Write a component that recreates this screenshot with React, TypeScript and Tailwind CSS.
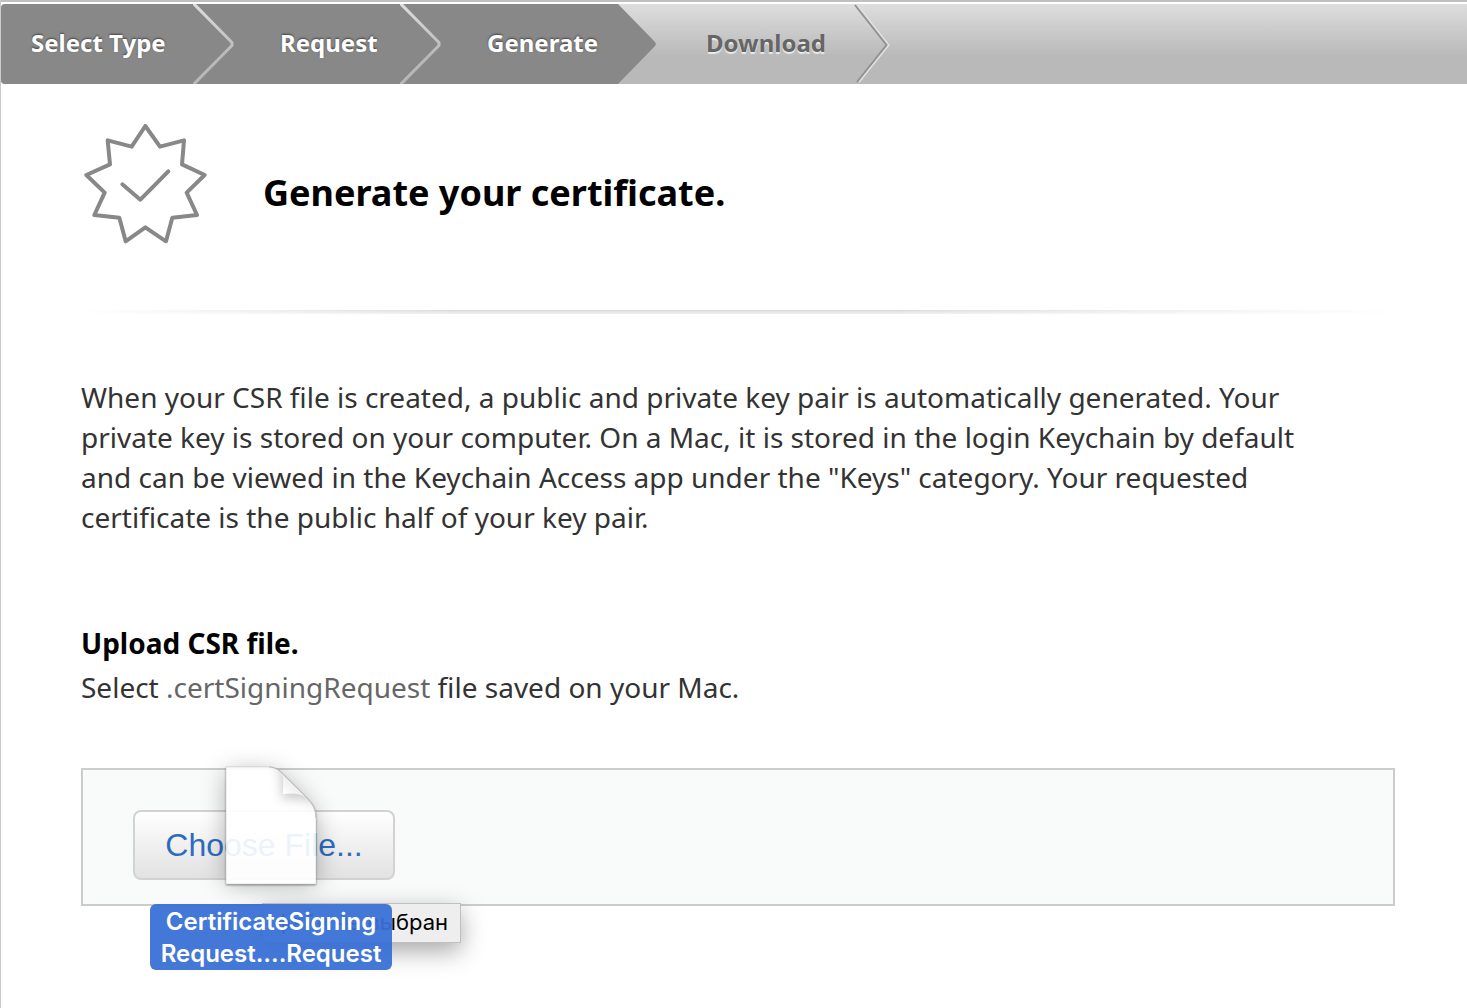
import React from "react";

interface StepProps {
  label: string;
  className: string;
  current?: boolean;
}

const Step: React.FC<StepProps> = ({ label, className, current }) => {
  return (
    <a
      href="#"
      aria-current={current ? "step" : undefined}
      className={`flex h-full shrink-0 items-center whitespace-nowrap pb-0.5 text-2xl font-bold ${className}`}
    >
      {label}
    </a>
  );
};

const DoneChevron: React.FC = () => (
  <svg className="h-20 w-[41px] shrink-0 bg-[#888]" viewBox="0 0 41 80" fill="none" aria-hidden="true">
    <defs>
      <linearGradient id="chevron" x1="0" y1="0" x2="0" y2="80" gradientUnits="userSpaceOnUse">
        <stop offset="0" stopColor="#dedede" />
        <stop offset="0.65" stopColor="#b8b8b8" />
        <stop offset="1" stopColor="#b8b8b8" />
      </linearGradient>
    </defs>
    <path d="M-1 -2 L39 38.5 V41.5 L-1 82" stroke="url(#chevron)" strokeWidth="3" />
  </svg>
);

const CurrentArrow: React.FC = () => (
  <svg className="h-20 w-[38px] shrink-0" viewBox="0 0 38 80" aria-hidden="true">
    <path d="M0 0 L37 38 Q38.500 40 37 42 L0 80 Z" fill="#888" />
  </svg>
);

const NextChevron: React.FC = () => (
  <svg className="h-20 w-9 shrink-0" viewBox="0 0 36 80" fill="none" aria-hidden="true">
    <path d="M3 1 L34.500 41 L5 78" stroke="#e2e2e2" strokeWidth="2" />
    <path d="M1 1 L32.500 41 L3 78" stroke="#929292" strokeWidth="2" />
  </svg>
);

const CertificateBadge: React.FC = () => (
  <svg
    className="h-[122px] w-[123px] shrink-0"
    viewBox="41 41 369 366"
    fill="none"
    stroke="#888"
    strokeWidth="12"
    strokeLinecap="round"
    strokeLinejoin="round"
    aria-hidden="true"
  >
    <path d="M225 47 L269 109 L341 90 L335 162 L403 194 L349 247 L380 314 L306 322 L287 393 L225 351 L166 393 L147 322 L72 314 L103 247 L48 194 L119 162 L112 90 L184 109 Z" />
    <path d="M156 222 L210 268 L294 183" />
  </svg>
);

const DocumentIcon: React.FC = () => (
  <svg
    className="mx-auto block h-[120px] w-[90px] overflow-visible"
    viewBox="1 0 90 120"
    aria-hidden="true"
  >
    <defs>
      <linearGradient id="fold" x1="59" y1="28" x2="70" y2="17" gradientUnits="userSpaceOnUse">
        <stop offset="0" stopColor="#ffffff" />
        <stop offset="1" stopColor="#ececec" />
      </linearGradient>
      <filter id="blurWide" x="-60%" y="-50%" width="220%" height="200%">
        <feGaussianBlur stdDeviation="12" />
      </filter>
      <filter id="blurFold" x="-100%" y="-100%" width="300%" height="300%">
        <feGaussianBlur stdDeviation="6" />
      </filter>
      <filter id="blurEdge" x="-10%" y="-10%" width="120%" height="120%">
        <feGaussianBlur stdDeviation="1" />
      </filter>
      <clipPath id="inside">
        <path d="M1 1 H44 C50 1 54 4 58 8 L82 32 C88 38 91 44 91 52 V118 H1 Z" />
      </clipPath>
      <mask id="outside" maskUnits="userSpaceOnUse" x="-60" y="-60" width="212" height="260">
        <rect x="-60" y="-60" width="212" height="260" fill="#fff" />
        <path d="M1 1 H44 C50 1 54 4 58 8 L82 32 C88 38 91 44 91 52 V118 H1 Z" fill="#000" />
      </mask>
    </defs>
    <g mask="url(#outside)">
      <path
        d="M1 6 H44 L58 13 L82 37 L91 57 V118 H1 Z"
        fill="#000"
        fillOpacity="0.3"
        filter="url(#blurWide)"
      />
      <path
        d="M1 2 H44 C50 2 54 5 58 9 L82 33 C88 39 91 45 91 53 V119 H1 Z"
        fill="#000"
        fillOpacity="0.5"
        filter="url(#blurEdge)"
      />
    </g>
    <path
      d="M1 1 H44 C50 1 54 4 58 8 L82 32 C88 38 91 44 91 52 V118 H1 Z"
      fill="#fff"
      fillOpacity="0.91"
      stroke="#ccc"
      strokeOpacity="0.6"
    />
    <g clipPath="url(#inside)">
      <path d="M48 0 L57 6 L57 32 L84 33 L92 42 L92 0 Z" fill="#000" fillOpacity="0.22" filter="url(#blurFold)" />
    </g>
    <path d="M57 8 C59 14 58 22 58 28 C66 27 74 27 81 31 Z" fill="url(#fold)" />
    <path d="M44 1 C50 1 54 4 58 8 L82 32 C88 38 91 44 91 52" fill="none" stroke="#bbb" />
  </svg>
);

const App: React.FC = () => {
  return (
    <div className="min-h-screen overflow-hidden border-l border-[#ccc] bg-white font-['Noto_Sans',sans-serif] text-[#333]">
      <div className="h-1 border-b-2 border-white bg-[#c0c0c0]" />
      <nav
        aria-label="Progress"
        className="flex h-20 overflow-hidden rounded-l bg-linear-to-b from-[#dedede] via-[#b9b9b9] via-65% to-[#b9b9b9]"
      >
        <Step
          label="Select Type"
          className="w-[192px] bg-[#888] pl-[30px] text-white [text-shadow:0_-1px_2px_rgba(0,0,0,0.5)]"
        />
        <DoneChevron />
        <Step
          label="Request"
          className="w-[166px] bg-[#888] pl-[46px] text-white [text-shadow:0_-1px_2px_rgba(0,0,0,0.5)]"
        />
        <DoneChevron />
        <Step
          label="Generate"
          current
          className="w-[177px] bg-[#888] pl-[46px] text-white [text-shadow:0_-1px_2px_rgba(0,0,0,0.5)]"
        />
        <CurrentArrow />
        <Step
          label="Download"
          className="w-[198px] pl-[50px] text-[#666] [text-shadow:0_2px_1px_rgba(255,255,255,0.7)]"
        />
        <NextChevron />
      </nav>

      <main className="pr-[72px] pl-20">
        <header className="flex items-center gap-14 pt-10 pl-[3px]">
          <CertificateBadge />
          <h1 className="pt-4 text-4xl font-bold text-black">Generate your certificate.</h1>
        </header>

        <div className="mt-16 h-1 bg-linear-to-b from-[#d8dada] to-[#f0f0f0] [mask-image:linear-gradient(to_right,transparent,black_30%,black_60%,transparent)]" />

        <p className="mt-[63px] max-w-[1250px] text-[28px] leading-10">
          When your CSR file is created, a public and private key pair is automatically generated. Your
          private key is stored on your computer. On a Mac, it is stored in the login Keychain by default
          and can be viewed in the Keychain Access app under the "Keys" category. Your requested
          certificate is the public half of your key pair.
        </p>

        <section>
          <h2 className="mt-[84px] text-[28px] leading-11 font-bold text-black">Upload CSR file.</h2>
          <p className="text-[28px] leading-11">
            Select <span className="text-[#666]">.certSigningRequest</span> file saved on your Mac.
          </p>

          <div className="relative mt-[59px] border-2 border-[#ccc] bg-[#f9fafa] px-[50px] pt-10 pb-6 font-['Liberation_Sans',sans-serif]">
            <button
              type="button"
              className="block h-[70px] w-[262px] rounded-lg border-2 border-[#d2d2d2] bg-linear-to-b from-white to-[#e2e2e2] text-[32px] text-[#2d6cc0]"
            >
              Choose File...
            </button>

            <div
              role="tooltip"
              className="absolute top-[133px] left-[179px] flex h-10 w-[199px] items-center justify-end border border-[#c0c0c0] bg-[#eee] pr-3 pb-0.5 font-['Inter',sans-serif] text-[22px] whitespace-nowrap text-black shadow-[0_8px_24px_rgba(0,0,0,0.35)]"
            >
              файл не выбран
            </div>

            {/* file being dragged over the drop area */}
            <div className="absolute -top-1 left-[67px] w-[242px]">
              <DocumentIcon />
              <div className="mt-[18px] h-[66px] rounded-md bg-[#3970d6]/95 pt-0.5 text-center font-['Inter',sans-serif] text-2xl leading-8 font-semibold text-white">
                CertificateSigning
                <br />
                Request....Request
              </div>
            </div>
          </div>
        </section>
      </main>
    </div>
  );
};

export default App;
